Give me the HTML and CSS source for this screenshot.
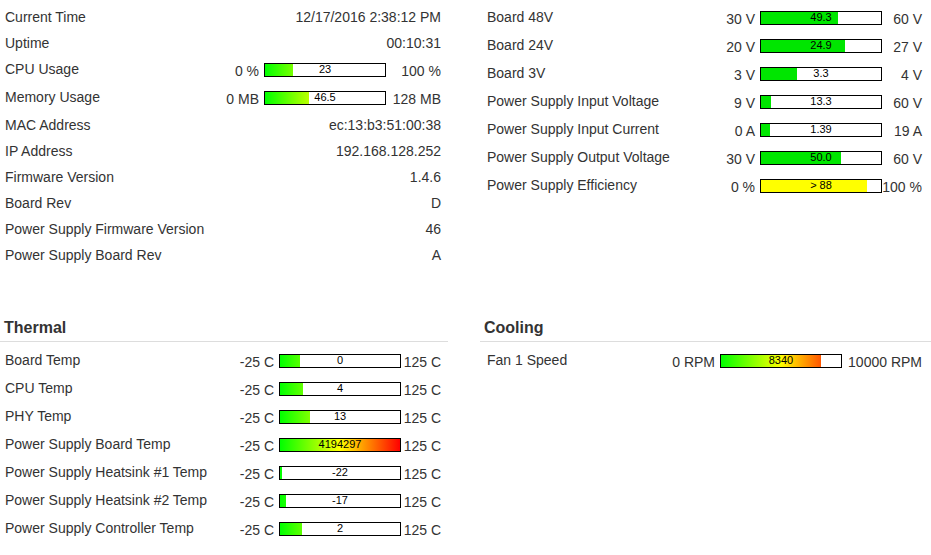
FILE: index.html
```html
<!DOCTYPE html>
<html lang="en">
<head>
    <meta charset="UTF-8">
    <title>Status</title>
    <link rel="stylesheet" href="styles.css">
</head>
<body>
    <div class="page">
        <!-- System info -->
        <div class="panel panel-left system">
            <div class="row"><span class="label">Current Time</span><span class="value">12/17/2016 2:38:12 PM</span></div>
            <div class="row"><span class="label">Uptime</span><span class="value">00:10:31</span></div>
            <div class="row"><span class="label">CPU Usage</span>
                <span class="gauge"><span class="min">0 %</span><span class="bar"><span class="fill heat" style="width:23%"></span><span class="num">23</span></span><span class="max">100 %</span></span>
            </div>
            <div class="row"><span class="label">Memory Usage</span>
                <span class="gauge"><span class="min">0 MB</span><span class="bar"><span class="fill heat" style="width:36.3%"></span><span class="num">46.5</span></span><span class="max">128 MB</span></span>
            </div>
            <div class="row"><span class="label">MAC Address</span><span class="value">ec:13:b3:51:00:38</span></div>
            <div class="row"><span class="label">IP Address</span><span class="value">192.168.128.252</span></div>
            <div class="row"><span class="label">Firmware Version</span><span class="value">1.4.6</span></div>
            <div class="row"><span class="label">Board Rev</span><span class="value">D</span></div>
            <div class="row"><span class="label">Power Supply Firmware Version</span><span class="value">46</span></div>
            <div class="row"><span class="label">Power Supply Board Rev</span><span class="value">A</span></div>
        </div>

        <!-- Power -->
        <div class="panel panel-right power">
            <div class="row"><span class="label">Board 48V</span>
                <span class="gauge"><span class="min">30 V</span><span class="bar"><span class="fill ok" style="width:64.3%"></span><span class="num">49.3</span></span><span class="max">60 V</span></span>
            </div>
            <div class="row"><span class="label">Board 24V</span>
                <span class="gauge"><span class="min">20 V</span><span class="bar"><span class="fill ok" style="width:70%"></span><span class="num">24.9</span></span><span class="max">27 V</span></span>
            </div>
            <div class="row"><span class="label">Board 3V</span>
                <span class="gauge"><span class="min">3 V</span><span class="bar"><span class="fill ok" style="width:30%"></span><span class="num">3.3</span></span><span class="max">4 V</span></span>
            </div>
            <div class="row"><span class="label">Power Supply Input Voltage</span>
                <span class="gauge"><span class="min">9 V</span><span class="bar"><span class="fill ok" style="width:8.4%"></span><span class="num">13.3</span></span><span class="max">60 V</span></span>
            </div>
            <div class="row"><span class="label">Power Supply Input Current</span>
                <span class="gauge"><span class="min">0 A</span><span class="bar"><span class="fill ok" style="width:7.3%"></span><span class="num">1.39</span></span><span class="max">19 A</span></span>
            </div>
            <div class="row"><span class="label">Power Supply Output Voltage</span>
                <span class="gauge"><span class="min">30 V</span><span class="bar"><span class="fill ok" style="width:66.7%"></span><span class="num">50.0</span></span><span class="max">60 V</span></span>
            </div>
            <div class="row"><span class="label">Power Supply Efficiency</span>
                <span class="gauge"><span class="min">0 %</span><span class="bar"><span class="fill warn" style="width:88%"></span><span class="num">&gt; 88</span></span><span class="max">100 %</span></span>
            </div>
        </div>

        <!-- Thermal -->
        <div class="panel panel-left thermal">
            <h3 class="panel-title">Thermal</h3>
            <div class="row"><span class="label">Board Temp</span>
                <span class="gauge"><span class="min">-25 C</span><span class="bar"><span class="fill heat" style="width:16.7%"></span><span class="num">0</span></span><span class="max">125 C</span></span>
            </div>
            <div class="row"><span class="label">CPU Temp</span>
                <span class="gauge"><span class="min">-25 C</span><span class="bar"><span class="fill heat" style="width:19.3%"></span><span class="num">4</span></span><span class="max">125 C</span></span>
            </div>
            <div class="row"><span class="label">PHY Temp</span>
                <span class="gauge"><span class="min">-25 C</span><span class="bar"><span class="fill heat" style="width:25.3%"></span><span class="num">13</span></span><span class="max">125 C</span></span>
            </div>
            <div class="row"><span class="label">Power Supply Board Temp</span>
                <span class="gauge"><span class="min">-25 C</span><span class="bar"><span class="fill heat" style="width:100%"></span><span class="num">4194297</span></span><span class="max">125 C</span></span>
            </div>
            <div class="row"><span class="label">Power Supply Heatsink #1 Temp</span>
                <span class="gauge"><span class="min">-25 C</span><span class="bar"><span class="fill heat" style="width:2%"></span><span class="num">-22</span></span><span class="max">125 C</span></span>
            </div>
            <div class="row"><span class="label">Power Supply Heatsink #2 Temp</span>
                <span class="gauge"><span class="min">-25 C</span><span class="bar"><span class="fill heat" style="width:5.3%"></span><span class="num">-17</span></span><span class="max">125 C</span></span>
            </div>
            <div class="row"><span class="label">Power Supply Controller Temp</span>
                <span class="gauge"><span class="min">-25 C</span><span class="bar"><span class="fill heat" style="width:18%"></span><span class="num">2</span></span><span class="max">125 C</span></span>
            </div>
        </div>

        <!-- Cooling -->
        <div class="panel panel-right cooling">
            <h3 class="panel-title">Cooling</h3>
            <div class="row"><span class="label">Fan 1 Speed</span>
                <span class="gauge"><span class="min">0 RPM</span><span class="bar"><span class="fill heat" style="width:83.4%"></span><span class="num">8340</span></span><span class="max">10000 RPM</span></span>
            </div>
        </div>
    </div>
</body>
</html>
```

FILE: styles.css
```css
/* Basic reset */
* {
    margin: 0;
    padding: 0;
    box-sizing: border-box;
}

body {
    font-family: "Liberation Sans", Arial, sans-serif;
    font-size: 14px;
    color: #333;
    background-color: white;
}

/* Two columns, two sections */
.page {
    display: grid;
    grid-template-columns: 448px 451px;
    column-gap: 32px;
    row-gap: 49px;
    padding-top: 4px;
}

/* Section heading */
.panel-title {
    font-size: 16px;
    font-weight: bold;
    line-height: 20px;
    padding: 1px 4px 3px;
    border-bottom: 1px solid #ddd;
    margin-bottom: 5px;
}

/* Rows */
.row {
    display: flex;
    align-items: flex-start;
    padding: 5px 7px 5px 5px;
    line-height: 16px;
}

.panel-right .row {
    padding-left: 7px;
    padding-right: 9px;
}

.label {
    flex: 1;
}

.value {
    text-align: right;
}

/* Min / bar / max group */
.gauge {
    display: flex;
    align-items: flex-start;
    padding-top: 2px;
}

.gauge .min {
    margin-right: 5px;
}

.gauge .max {
    text-align: right;
}

.system .max { width: 55px; }
.power .max { width: 40px; }
.thermal .max { width: 40px; }
.cooling .max { width: 80px; }

.bar {
    display: grid;
    width: 122px;
    height: 14px;
    border: 1px solid #000;
    background-color: white;
}

.fill, .num {
    grid-area: 1 / 1;
}

.fill {
    height: 12px;
}

.num {
    font-size: 11px;
    line-height: 11px;
    color: #000;
    text-align: center;
}

/* Fill colours */
.fill.ok {
    background-color: #00e600;
}

.fill.warn {
    background-color: #ffff00;
}

.fill.heat {
    background: linear-gradient(to right, #00ff00 0, #ffff00 60px, #ff0000 120px);
}
```
